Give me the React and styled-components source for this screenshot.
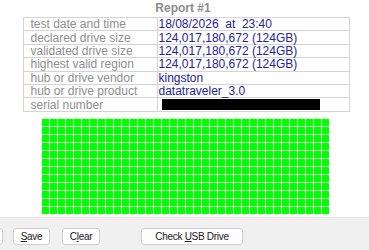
import styled, { createGlobalStyle } from "styled-components";

const GlobalStyle = createGlobalStyle`
    html, body {
        margin: 0;
        padding: 0;
        background: #ffffff;
        font-family: "Liberation Sans", Arial, sans-serif;
        overflow: hidden;
    }
`;

const rows = [
    { label: "test date and time", value: "18/08/2026  at  23:40" },
    { label: "declared drive size", value: "124,017,180,672 (124GB)" },
    { label: "validated drive size", value: "124,017,180,672 (124GB)" },
    { label: "highest valid region", value: "124,017,180,672 (124GB)" },
    { label: "hub or drive vendor", value: "kingston" },
    { label: "hub or drive product", value: "datatraveler_3.0" },
    { label: "serial number", hidden: true },
];

const COLS = 36;
const ROWS = 12;

const App = () => {
    return (
        <StPage>
            <GlobalStyle />
            <StMain>
                <StTitle>Report #1</StTitle>
                <StTable>
                    <tbody>
                        {rows.map((row) => (
                            <tr key={row.label}>
                                <StLabel>{row.label}</StLabel>
                                <StValue>
                                    {row.hidden ? <StRedacted /> : row.value}
                                </StValue>
                            </tr>
                        ))}
                    </tbody>
                </StTable>
                <StGrid>
                    {Array.from({ length: COLS * ROWS }).map((_, i) => (
                        <StCell key={i} />
                    ))}
                </StGrid>
            </StMain>
            <StFooter>
                <StButton $w={40} $ml={-37} />
                <StButton $w={37} $ml={10}>
                    <span>
                        <u>S</u>ave
                    </span>
                </StButton>
                <StButton $w={38} $ml={12}>
                    <span>
                        C<u>l</u>ear
                    </span>
                </StButton>
                <StButton $w={102} $ml={41}>
                    <span>
                        Check <u>U</u>SB Drive
                    </span>
                </StButton>
            </StFooter>
        </StPage>
    );
};

export default App;

const StPage = styled.div`
    width: 369px;
    height: 250px;
    display: flex;
    flex-direction: column;
    overflow: hidden;
`;

const StMain = styled.div`
    height: 217px;
    display: flex;
    flex-direction: column;
    align-items: center;
    background: #ffffff;
`;

const StTitle = styled.div`
    height: 17px;
    line-height: 17px;
    font-size: 12px;
    font-weight: bold;
    color: #8c8c8c;
    margin-left: -3px;
`;

const StTable = styled.table`
    border-collapse: collapse;
    width: 327px;
    margin-left: 3px;
    table-layout: fixed;
    font-size: 12px;

    td {
        border: 1px solid #d4d4d4;
        height: 12.4px;
        line-height: 12px;
        padding: 0;
        white-space: pre;
    }
`;

const StLabel = styled.td`
    width: 126px;
    padding-left: 7px !important;
    color: #8e8e8e;
`;

const StValue = styled.td`
    padding-left: 1px !important;
    color: #23239b;
`;

const StRedacted = styled.div`
    width: 158px;
    height: 11px;
    margin-left: 3px;
    background: #000000;
`;

const StGrid = styled.div`
    margin-top: 6px;
    margin-left: 1px;
    display: grid;
    grid-template-columns: repeat(${COLS}, 7px);
    grid-template-rows: repeat(${ROWS}, 7px);
    gap: 1px;
    padding: 1px 0 0 0;
    background: #d6fcd6;
`;

const StCell = styled.div`
    background: #00ff00;
`;

const StFooter = styled.div`
    flex: 1;
    background: #f0f0f0;
    border-top: 1px solid #e6e6e6;
    display: flex;
    align-items: flex-start;
    padding-top: 10px;
    overflow: hidden;
`;

const StButton = styled.div`
    flex: none;
    box-sizing: border-box;
    width: ${(p) => p.$w}px;
    height: 17px;
    margin-left: ${(p) => p.$ml}px;
    background: #fdfdfd;
    border: 1px solid #d0d0d0;
    border-radius: 3px;
    font-size: 10px;
    letter-spacing: -0.3px;
    color: #1a1a1a;
    display: flex;
    align-items: center;
    justify-content: center;
    white-space: pre;

    u {
        text-decoration-thickness: 1px;
        text-underline-offset: 1px;
    }
`;
